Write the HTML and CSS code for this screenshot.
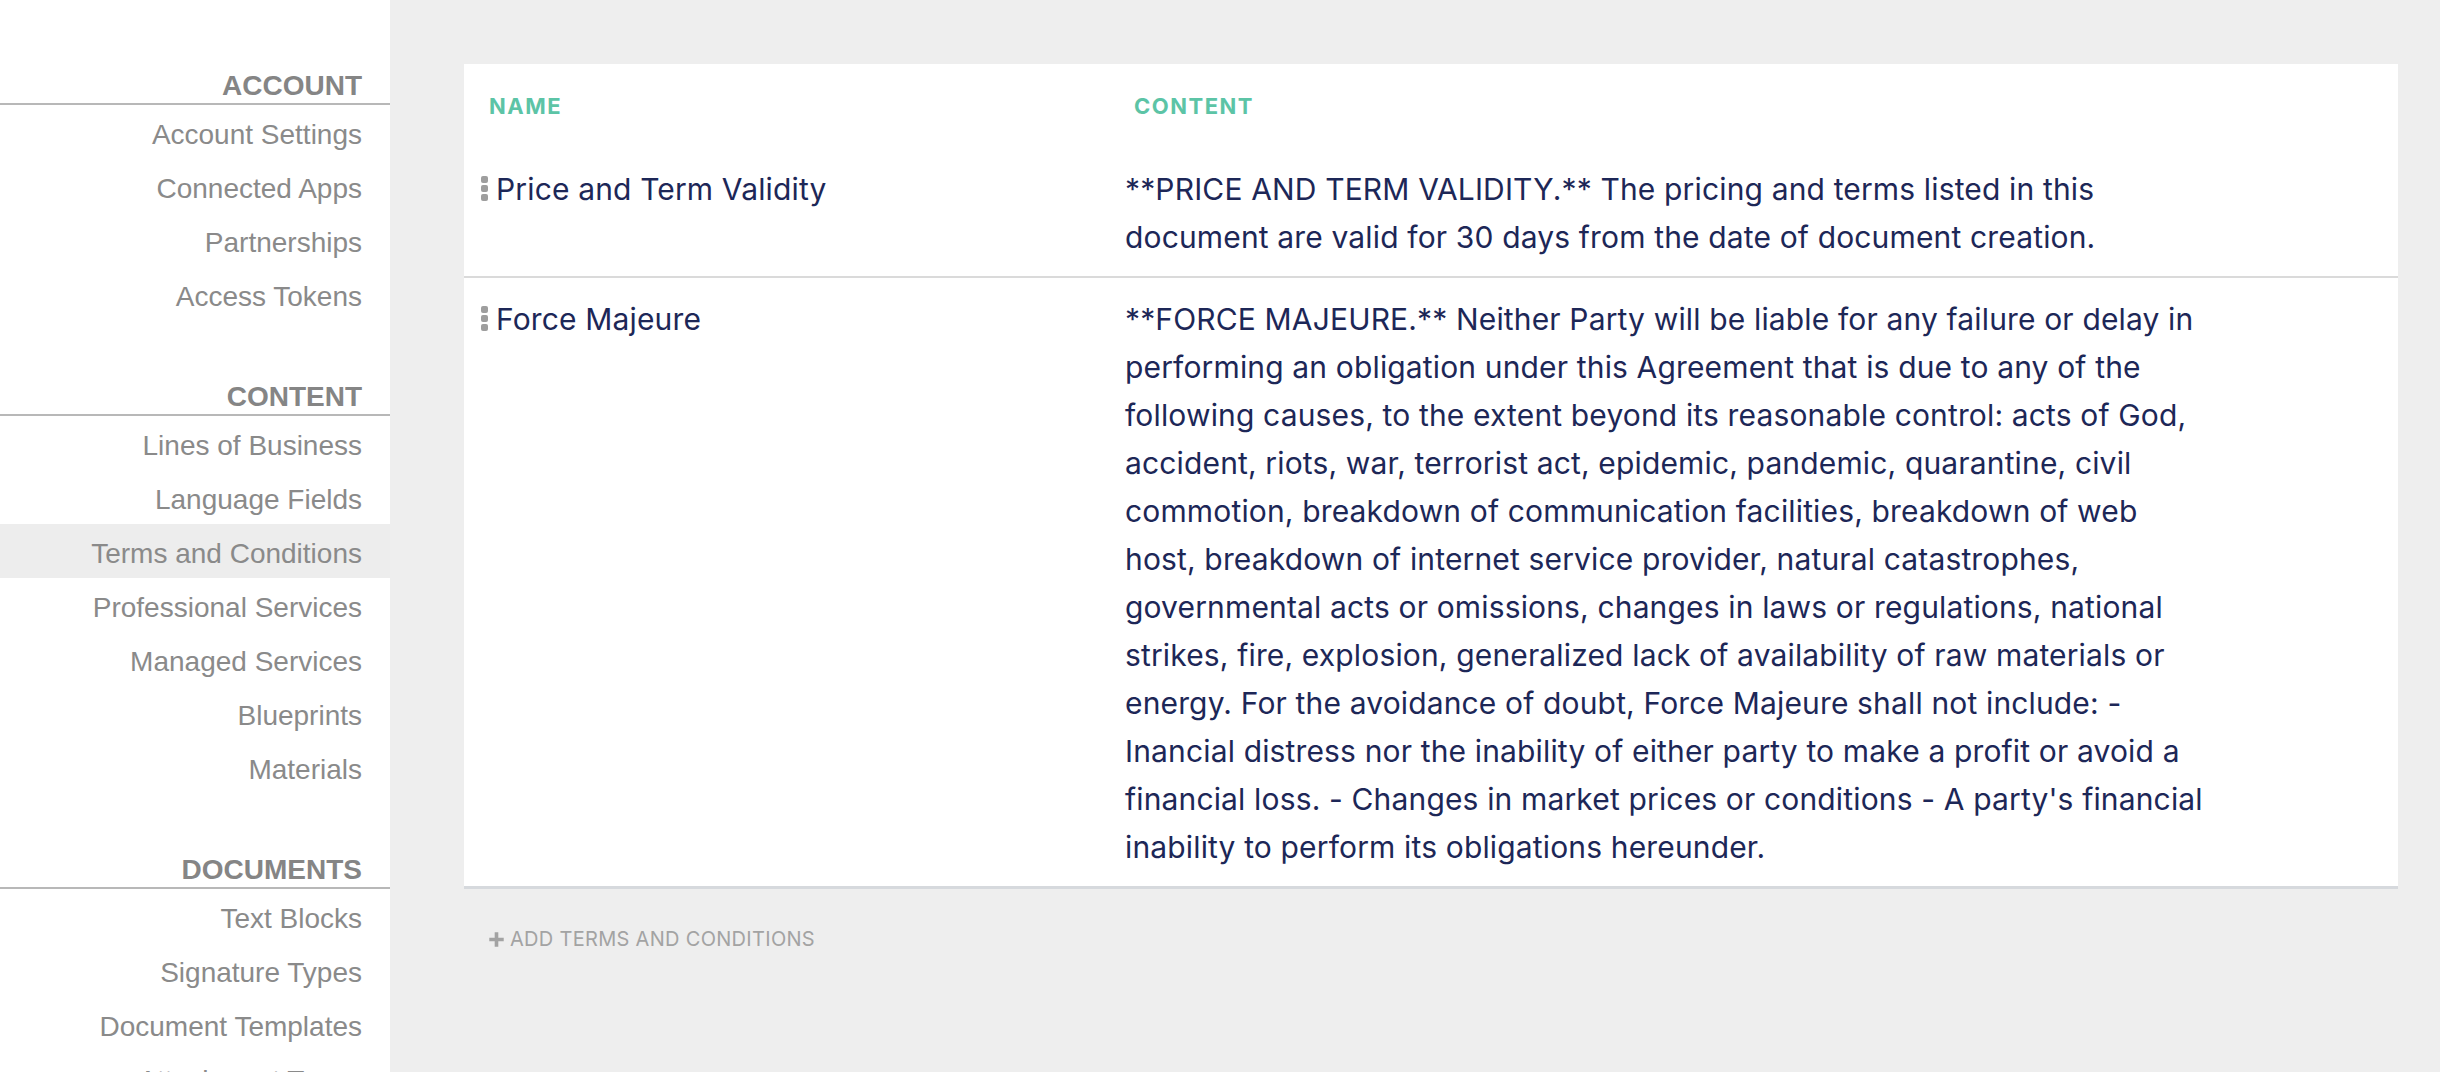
FILE: index.html
```html
<!DOCTYPE html>
<html lang="en">
<head>
<meta charset="utf-8">
<title>Terms and Conditions</title>
<link rel="stylesheet" href="styles.css">
</head>
<body>
<div class="app">
  <aside class="sidebar">
    <section class="nav-section">
      <h3 class="nav-heading">ACCOUNT</h3>
      <ul class="nav-list">
        <li class="nav-item">Account Settings</li>
        <li class="nav-item">Connected Apps</li>
        <li class="nav-item">Partnerships</li>
        <li class="nav-item">Access Tokens</li>
      </ul>
    </section>
    <section class="nav-section">
      <h3 class="nav-heading">CONTENT</h3>
      <ul class="nav-list">
        <li class="nav-item">Lines of Business</li>
        <li class="nav-item">Language Fields</li>
        <li class="nav-item active">Terms and Conditions</li>
        <li class="nav-item">Professional Services</li>
        <li class="nav-item">Managed Services</li>
        <li class="nav-item">Blueprints</li>
        <li class="nav-item">Materials</li>
      </ul>
    </section>
    <section class="nav-section">
      <h3 class="nav-heading">DOCUMENTS</h3>
      <ul class="nav-list">
        <li class="nav-item">Text Blocks</li>
        <li class="nav-item">Signature Types</li>
        <li class="nav-item">Document Templates</li>
        <li class="nav-item">Attachment Types</li>
      </ul>
    </section>
  </aside>

  <main class="main">
    <div class="card">
      <div class="table-head">
        <div class="th th-name">NAME</div>
        <div class="th th-content">CONTENT</div>
        <div class="th th-actions"></div>
      </div>

      <div class="row">
        <div class="cell cell-name">
          <span class="handle"><i></i><i></i><i></i></span>
          <span class="name-text">Price and Term Validity</span>
        </div>
        <div class="cell cell-content">**PRICE AND TERM VALIDITY.** The pricing and terms listed in this document are valid for 30 days from the date of document creation.</div>
        <div class="cell cell-actions"></div>
      </div>

      <div class="row row-last">
        <div class="cell cell-name">
          <span class="handle"><i></i><i></i><i></i></span>
          <span class="name-text">Force Majeure</span>
        </div>
        <div class="cell cell-content">**FORCE MAJEURE.** Neither Party will be liable for any failure or delay in performing an obligation under this Agreement that is due to any of the following causes, to the extent beyond its reasonable control: acts of God, accident, riots, war, terrorist act, epidemic, pandemic, quarantine, civil commotion, breakdown of communication facilities, breakdown of web host, breakdown of internet service provider, natural catastrophes, governmental acts or omissions, changes in laws or regulations, national strikes, fire, explosion, generalized lack of availability of raw materials or energy. For the avoidance of doubt, Force Majeure shall not include: - Inancial distress nor the inability of either party to make a profit or avoid a financial loss. - Changes in market prices or conditions - A party's financial inability to perform its obligations hereunder.</div>
        <div class="cell cell-actions"></div>
      </div>
    </div>

    <button class="add-btn" type="button">
      <svg class="plus" viewBox="0 0 16 16" width="17" height="17" aria-hidden="true">
        <path d="M6.3 1.2h3.4v5.1h5.1v3.4H9.7v5.1H6.3V9.7H1.2V6.3h5.1z" fill="currentColor"/>
      </svg>
      <span>ADD TERMS AND CONDITIONS</span>
    </button>
  </main>
</div>
</body>
</html>
```

FILE: styles.css
```css
* {
  box-sizing: border-box;
}

html, body {
  margin: 0;
  padding: 0;
  height: 100%;
}

body {
  font-family: "Liberation Sans", Arial, sans-serif;
  background: #eeeeee;
  overflow: hidden;
}

.app {
  display: flex;
  height: 1072px;
  overflow: hidden;
}

/* ---------- Sidebar ---------- */
.sidebar {
  width: 390px;
  flex: 0 0 390px;
  background: #ffffff;
  padding-top: 69px;
}

.nav-section + .nav-section {
  margin-top: 59px;
}

.nav-heading {
  margin: 0;
  font-size: 28px;
  font-weight: 700;
  line-height: 34px;
  color: #858585;
  text-align: right;
  padding-right: 28px;
  border-bottom: 2px solid #b8b8b8;
}

.nav-list {
  list-style: none;
  margin: 0;
  padding: 0;
}

.nav-item {
  height: 54px;
  padding-top: 3px;
  line-height: 54px;
  font-size: 28px;
  color: #8a8a8a;
  text-align: right;
  padding-right: 28px;
  white-space: nowrap;
}

.nav-item.active {
  background: #ededed;
}

/* ---------- Main ---------- */
.main {
  flex: 1;
  background: #eeeeee;
  padding: 64px 42px 0 74px;
  font-family: Inter, "Noto Sans", sans-serif;
}

.card {
  background: #ffffff;
}

.table-head,
.row {
  display: grid;
  grid-template-columns: 661px 1087px 1fr;
}

.table-head {
  padding: 28px 0 28px;
}

.th {
  font-size: 22px;
  line-height: 28px;
  font-weight: 700;
  letter-spacing: 1.5px;
  color: #5cc4a6;
}

.th-name {
  padding-left: 25px;
}

.th-content {
  padding-left: 9px;
}

.row {
  padding: 17px 0 15px;
  border-bottom: 2px solid #dadada;
}

.row-last {
  border-bottom: 3px solid #d6d9dd;
}

.cell {
  font-size: 30px;
  line-height: 48px;
  letter-spacing: 0.15px;
  color: #1d2757;
}

.cell-name {
  display: flex;
  align-items: flex-start;
  padding-left: 17px;
}

.handle {
  display: flex;
  flex-direction: column;
  gap: 2px;
  width: 7px;
  margin-top: 11px;
  margin-right: 8px;
  flex: 0 0 7px;
}

.handle i {
  display: block;
  width: 7px;
  height: 7px;
  border-radius: 2px;
  background: #9e9e9e;
}

.add-btn {
  display: flex;
  align-items: center;
  gap: 5px;
  margin: 35px 0 0 24px;
  padding: 0;
  border: 0;
  background: transparent;
  font-family: Inter, "Noto Sans", sans-serif;
  font-size: 20px;
  line-height: 30px;
  letter-spacing: 0.3px;
  color: #a3a3a3;
  cursor: pointer;
}

.plus {
  display: block;
  color: #a3a3a3;
}
```
